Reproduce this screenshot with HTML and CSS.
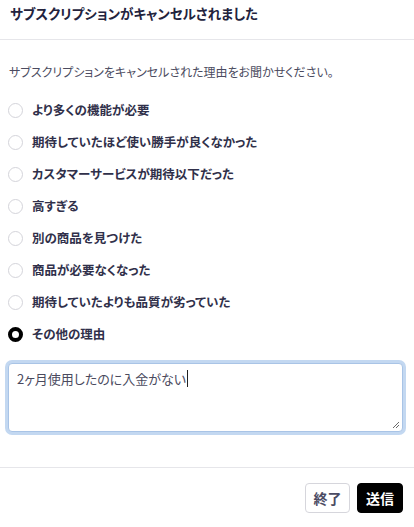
FILE: index.html
```html
<!DOCTYPE html>
<html lang="ja">
<head>
<meta charset="utf-8">
<link rel="stylesheet" href="styles.css">
</head>
<body>
<div class="modal">
  <header class="modal-header">
    <h1 class="title">サブスクリプションがキャンセルされました</h1>
  </header>
  <section class="modal-body">
    <p class="desc">サブスクリプションをキャンセルされた理由をお聞かせください。</p>
    <ul class="options">
      <li class="option"><span class="radio"></span><span class="label">より多くの機能が必要</span></li>
      <li class="option"><span class="radio"></span><span class="label">期待していたほど使い勝手が良くなかった</span></li>
      <li class="option"><span class="radio"></span><span class="label">カスタマーサービスが期待以下だった</span></li>
      <li class="option"><span class="radio"></span><span class="label">高すぎる</span></li>
      <li class="option"><span class="radio"></span><span class="label">別の商品を見つけた</span></li>
      <li class="option"><span class="radio"></span><span class="label">商品が必要なくなった</span></li>
      <li class="option"><span class="radio"></span><span class="label">期待していたよりも品質が劣っていた</span></li>
      <li class="option"><span class="radio checked"></span><span class="label">その他の理由</span></li>
    </ul>
    <div class="textarea-wrap">
      <div class="textarea"><span class="typed">2ヶ月使用したのに入金がない</span><span class="caret"></span>
        <svg class="grip" width="8" height="8" viewBox="0 0 8 8"><path d="M7 1 L1 7 M7 4 L4 7" stroke="#6b6b6b" stroke-width="1"/></svg>
      </div>
    </div>
  </section>
  <footer class="modal-footer">
    <button class="btn btn-secondary">終了</button>
    <button class="btn btn-primary">送信</button>
  </footer>
</div>
</body>
</html>
```
FILE: styles.css
```css
* { box-sizing: border-box; }
html, body { margin: 0; padding: 0; background: #fff; }
body {
  font-family: "Noto Sans CJK JP", "Noto Sans", sans-serif;
  font-feature-settings: "palt";
  width: 414px;
}
.modal-header {
  height: 40px;
  border-bottom: 1px solid #e6e6ea;
  padding: 3px 10px 0;
}
.title {
  margin: 0;
  font-size: 13.5px;
  line-height: 20px;
  font-weight: 600;
  color: #23233d;
}
.modal-body {
  padding: 22px 11px 35px 8px;
}
.desc {
  margin: 0 0 0 1px;
  font-size: 12px;
  line-height: 20px;
  color: #4b4b60;
}
.options {
  list-style: none;
  margin: 12px 0 0;
  padding: 0;
}
.option {
  height: 32px;
  display: flex;
  align-items: center;
}
.radio {
  width: 15px;
  height: 15px;
  border-radius: 50%;
  border: 1px solid #d4d4da;
  background: #fff;
  flex: none;
}
.radio.checked {
  border: 4px solid #000;
}
.label {
  margin-left: 9px;
  font-size: 12.5px;
  font-weight: 700;
  color: #30304a;
  line-height: 20px;
}
.textarea-wrap {
  margin-top: 13px;
}
.textarea {
  position: relative;
  height: 69px;
  border: 1px solid #a9c4e6;
  border-radius: 4px;
  box-shadow: 0 0 0 3px #c3d8f1;
  padding: 5px 8px;
  font-size: 13px;
  line-height: 20px;
  color: #4a4a5e;
  background: #fff;
}
.caret {
  display: inline-block;
  width: 1px;
  height: 17px;
  background: #222;
  vertical-align: -3px;
  margin-left: 1px;
}
.grip {
  position: absolute;
  right: 2px;
  bottom: 2px;
}
.modal-footer {
  border-top: 1px solid #e6e6ea;
  padding: 15px 11px 0 0;
  display: flex;
  justify-content: flex-end;
  gap: 7px;
}
.btn {
  font-family: inherit;
  font-feature-settings: "palt";
  font-size: 14px;
  font-weight: 700;
  height: 30px;
  padding: 0;
  white-space: nowrap;
  border-radius: 4px;
  cursor: pointer;
}
.btn-secondary {
  width: 45px;
  background: #fff;
  border: 1px solid #d6d6dc;
  color: #4b4b63;
}
.btn-primary {
  width: 46px;
  background: #000;
  border: 1px solid #000;
  color: #fff;
}
```
